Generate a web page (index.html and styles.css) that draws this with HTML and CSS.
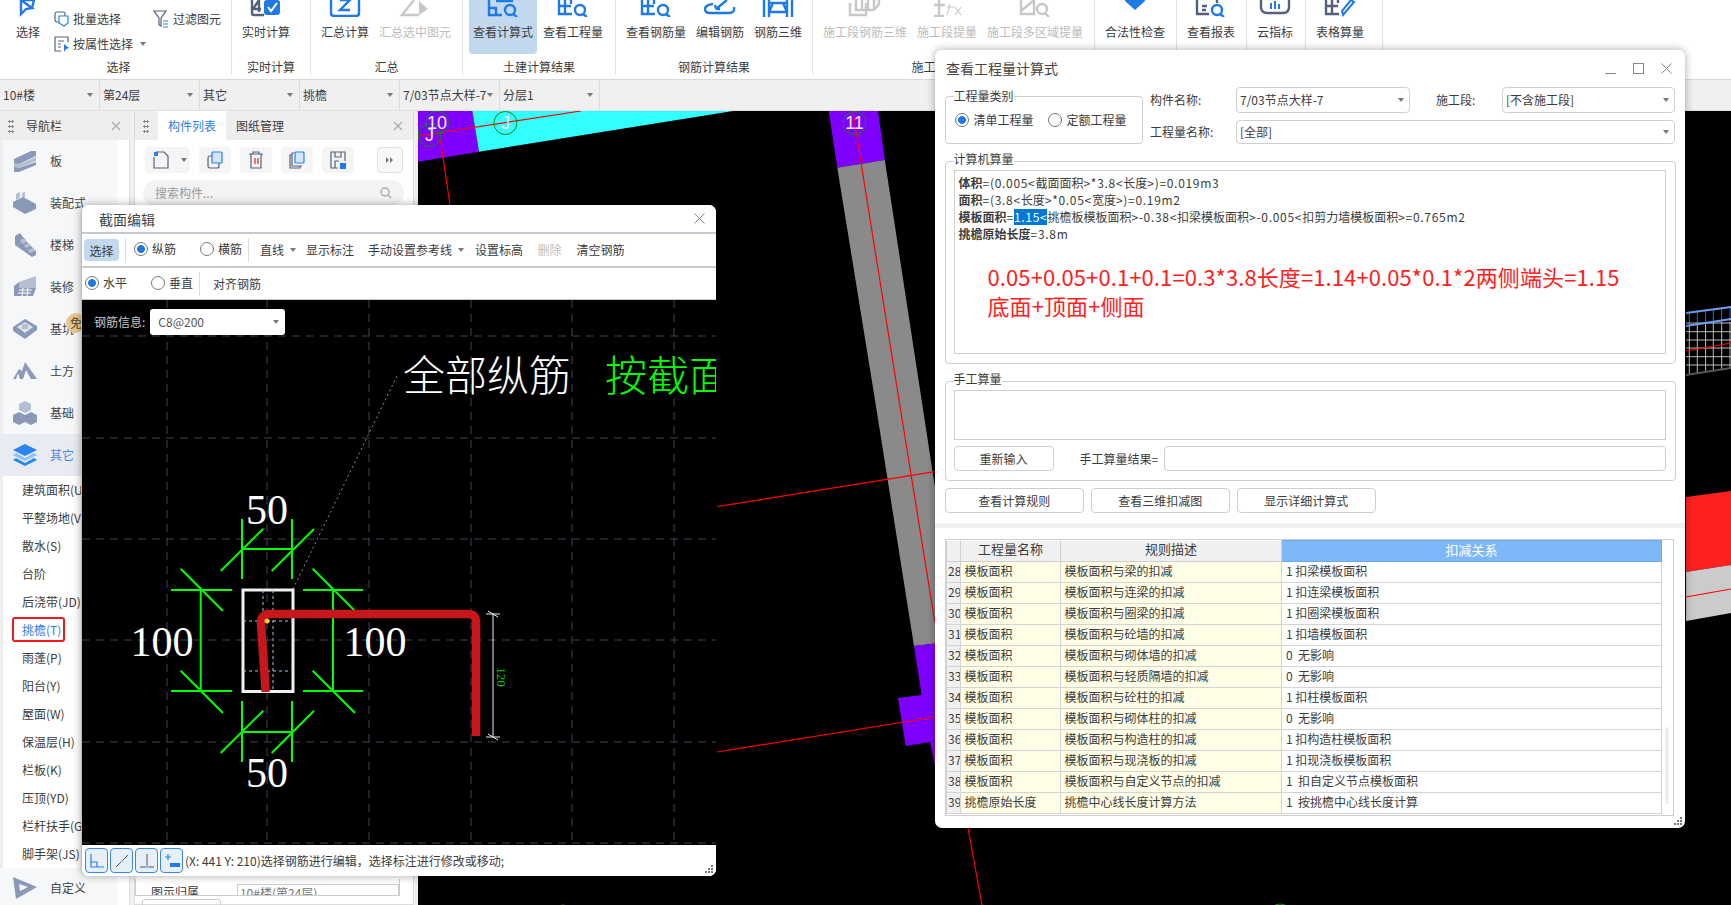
FILE: index.html
```html
<!DOCTYPE html>
<html lang="zh-CN">
<head>
<meta charset="utf-8">
<title>查看工程量计算式</title>
<link rel="stylesheet" href="styles.css">
</head>
<body>
<div class="app">
  <header class="ribbon">
    <div class="group g-select">
      <div class="tools">
        <div class="tool">
          <svg class="ti" width="24" height="17" viewBox="0 0 24 17"><path class="st" d="M5 0V14L10 9L16 8L5 0" /><path class="st" d="M5 0H18L16 8"/></svg>
          <span>选择</span>
        </div>
        <div class="small-grid">
          <div class="small"><svg width="16" height="16" viewBox="0 0 16 16"><rect class="sd" x="1" y="1" width="10" height="10" rx="2"/><path class="sb" d="M5 5H14V12L10 15L5 12Z"/></svg><span>批量选择</span></div>
          <div class="small filter"><svg width="16" height="18" viewBox="0 0 16 18"><path class="sd" d="M1 1H13L8 8V16L6 15V8Z"/><path class="sb" d="M10 11H15M10 14H15M10 17H15"/></svg><span>过滤图元</span></div>
          <div class="small"><svg width="16" height="16" viewBox="0 0 16 16"><path class="sd" d="M14 6V1H1V15H7M4 5H10M4 8H7M4 11H7"/><path class="bf" d="M10 8L15 12L12 13L10 16Z"/></svg><span>按属性选择</span><i class="caret small-caret"></i></div>
        </div>
      </div>
      <div class="glabel">选择</div>
    </div>
    <div class="group g-real">
      <div class="tools">
        <div class="tool">
          <svg class="ti" width="32" height="17" viewBox="0 0 32 17"><path class="sd2" d="M2 0V13Q2 15 4 15H14M9 0L3 9H11M9 0V12"/><rect class="bf" x="14" y="0" width="16" height="15" rx="3"/><path class="sw" d="M18 7L21 11L27 3"/></svg>
          <span>实时计算</span>
        </div>
      </div>
      <div class="glabel">实时计算</div>
    </div>
    <div class="group g-sum">
      <div class="tools">
        <div class="tool">
          <svg class="ti" width="32" height="17" viewBox="0 0 32 17"><path class="st" d="M2 0V13Q2 16 5 16H27Q30 16 30 13V0"/><path class="st" d="M11 0H21L11 10H21"/></svg>
          <span>汇总计算</span>
        </div>
        <div class="tool off">
          <svg class="ti" width="32" height="17" viewBox="0 0 32 17"><path class="sg" d="M15 0L3 15H20"/><path class="gf" d="M20 1L29 9L20 15Z"/></svg>
          <span>汇总选中图元</span>
        </div>
      </div>
      <div class="glabel">汇总</div>
    </div>
    <div class="group g-civil">
      <div class="tools">
        <div class="tool active">
          <svg class="ti" width="32" height="17" viewBox="0 0 32 17"><path class="st" d="M2 0V15H15M2 8H9V15M9 1H26"/><circle class="st" cx="23" cy="10" r="5"/><path class="st" d="M26 14L30 17"/></svg>
          <span>查看计算式</span>
        </div>
        <div class="tool">
          <svg class="ti" width="32" height="17" viewBox="0 0 32 17"><path class="st" d="M2 0V14H15M8 0V14M2 6H14M14 0V4"/><circle class="st" cx="23" cy="10" r="5"/><path class="st" d="M26 14L30 17"/></svg>
          <span>查看工程量</span>
        </div>
      </div>
      <div class="glabel">土建计算结果</div>
    </div>
    <div class="group g-rebar">
      <div class="tools">
        <div class="tool">
          <svg class="ti" width="32" height="17" viewBox="0 0 32 17"><path class="st" d="M2 0V14H15M8 0V14M2 6H14M14 0V4"/><circle class="st" cx="23" cy="10" r="5"/><path class="st" d="M26 14L30 17"/></svg>
          <span>查看钢筋量</span>
        </div>
        <div class="tool">
          <svg class="ti" width="32" height="17" viewBox="0 0 32 17"><path class="st" d="M9 4Q1 5 1 9Q1 13 6 13H25Q31 13 30 7"/><path class="st" d="M12 9L23 0M12 9L11 5M12 9L16 9"/></svg>
          <span>编辑钢筋</span>
        </div>
        <div class="tool">
          <svg class="ti" width="32" height="17" viewBox="0 0 32 17"><path class="st" d="M2 0V17M7 0V17M25 0V17M30 0V17M7 3H25M7 12H25M11 3L7 12M21 3L25 12"/></svg>
          <span>钢筋三维</span>
        </div>
      </div>
      <div class="glabel">钢筋计算结果</div>
    </div>
    <div class="group g-stage">
      <div class="tools">
        <div class="tool off">
          <svg class="ti" width="34" height="17" viewBox="0 0 34 17"><path class="sg" d="M2 3V15H18V3M8 0V10H26M14 0V10M20 0V10M26 0V10"/><path class="sg" d="M26 10L31 4V0"/></svg>
          <span>施工段钢筋三维</span>
        </div>
        <div class="tool off">
          <svg class="ti" width="32" height="17" viewBox="0 0 32 17"><path class="sg" d="M3 16H13M8 16V0M3 5H14"/><path class="sg thin" d="M19 4Q17 14 15 15M16 7H23M24 7L30 15M30 7L24 15"/></svg>
          <span>施工段提量</span>
        </div>
        <div class="tool off">
          <svg class="ti" width="32" height="17" viewBox="0 0 32 17"><path class="sg" d="M2 0V14H15V0M2 11L14 1"/><circle class="sg" cx="23" cy="9" r="5"/><path class="sg" d="M26 13L30 17"/></svg>
          <span>施工段多区域提量</span>
        </div>
      </div>
      <div class="glabel">施工段计算结果</div>
    </div>
    <div class="group g-check">
      <div class="tools"><div class="tool">
        <svg class="ti" width="24" height="17" viewBox="0 0 24 17"><path class="bf" d="M2 0H22V1L12 10L2 1Z"/></svg>
        <span>合法性检查</span>
      </div></div>
    </div>
    <div class="group g-report">
      <div class="tools"><div class="tool">
        <svg class="ti" width="32" height="17" viewBox="0 0 32 17"><path class="sd2" d="M2 0V14H14M7 6H12M7 10H11M22 0V3"/><circle class="st" cx="22" cy="10" r="5"/><path class="st" d="M25 14L29 17"/></svg>
        <span>查看报表</span>
      </div></div>
    </div>
    <div class="group g-cloud">
      <div class="tools"><div class="tool">
        <svg class="ti" width="32" height="17" viewBox="0 0 32 17"><path class="sd2" d="M2 0V7Q2 13 8 13H24Q30 13 30 7V0"/><path class="sb2" d="M12 3V9M16 1V9M20 4V9"/></svg>
        <span>云指标</span>
      </div></div>
    </div>
    <div class="group g-table">
      <div class="tools"><div class="tool">
        <svg class="ti" width="32" height="17" viewBox="0 0 32 17"><path class="sd2" d="M2 0V14H15M8 0V14M2 6H14M14 0V3"/><path class="sb2" d="M19 15L30 2L27 0L18 11Z"/></svg>
        <span>表格算量</span>
      </div></div>
    </div>
  </header>

  <nav class="bar">
    <div class="cell"><span>10#楼</span><i class="caret"></i></div>
    <div class="cell"><span>第24层</span><i class="caret"></i></div>
    <div class="cell"><span>其它</span><i class="caret"></i></div>
    <div class="cell"><span>挑檐</span><i class="caret"></i></div>
    <div class="cell"><span>7/03节点大样-7</span><i class="caret"></i></div>
    <div class="cell"><span>分层1</span><i class="caret"></i></div>
  </nav>

  <main class="work">
    <aside class="nav">
      <div class="panel-head nav-head">
        <i class="dots"></i><span class="nav-title">导航栏</span><svg class="x" width="10" height="10" viewBox="0 0 10 10"><path d="M1 1L9 9M9 1L1 9"/></svg>
      </div>
      <div class="nav-body">
        <div class="nav-item"><svg width="24" height="22" viewBox="0 0 24 22"><path class="n1" d="M1 9L18 1L23 1V6L6 14H1Z"/><path class="n2" d="M1 13L6 14L23 7V11L6 18H1Z"/><path class="n1" d="M1 17L6 18L23 12V15L6 22H1Z"/></svg><span>板</span></div>
        <div class="nav-item"><svg width="24" height="22" viewBox="0 0 24 22"><path class="n2" d="M3 2L7 0V6L3 8ZM9 1L12 0V5L9 6Z"/><path class="n1" d="M0 10L10 5L23 12V17L12 22L0 15Z"/></svg><span>装配式</span></div>
        <div class="nav-item"><svg width="24" height="24" viewBox="0 0 24 24"><path class="n1" d="M2 3L7 0L10 4L14 9L18 13L23 18V22L19 24L2 12Z"/><path class="n2" d="M7 7L12 5L14 9L9 11ZM11 12L16 10L18 13L13 15ZM15 17L20 15L22 18L17 20Z"/></svg><span>楼梯</span></div>
        <div class="nav-item"><svg width="24" height="22" viewBox="0 0 24 22"><path class="n2" d="M6 6L23 0V12L6 12Z"/><path class="n1" d="M1 10L6 6V12H23L20 20H1Z"/><path class="w" d="M6 14H19M5 17H18M10 12L9 20M15 12L14 20"/></svg><span>装修</span></div>
        <div class="nav-item"><svg width="24" height="20" viewBox="0 0 24 20"><path class="n1" d="M12 0L24 7V11L12 20L0 12V8Z"/><path class="n3" d="M12 3L20 8L12 14L4 8Z"/><path class="n2" d="M9 5H15V10H9Z"/></svg><span>基坑</span></div>
        <div class="nav-item"><svg width="24" height="18" viewBox="0 0 24 18"><path class="n1" d="M0 17L6 7L9 9L12 0L24 17H18L13 8L10 17H7L5 11L3 17Z"/></svg><span>土方</span></div>
        <div class="nav-item"><svg width="24" height="24" viewBox="0 0 24 24"><path class="n2" d="M12 0L18 3V9L12 12L6 9V3Z"/><path class="n1" d="M6 11L12 14V21L6 24L0 21V14Z"/><path class="n1" d="M18 11L24 14V21L18 24L12 21V14Z"/></svg><span>基础</span></div>
        <div class="nav-item active"><svg width="24" height="22" viewBox="0 0 24 22"><path class="b1" d="M12 0L24 6L12 12L0 6Z"/><path class="b2" d="M3 9L12 14L21 9L24 11L12 17L0 11Z"/><path class="b1" d="M3 14L12 19L21 14L24 16L12 22L0 16Z"/></svg><span>其它</span></div>
        <ul class="sub">
          <li>建筑面积(U)</li>
          <li>平整场地(V)</li>
          <li>散水(S)</li>
          <li>台阶</li>
          <li>后浇带(JD)</li>
          <li class="picked"><span>挑檐(T)</span></li>
          <li>雨蓬(P)</li>
          <li>阳台(Y)</li>
          <li>屋面(W)</li>
          <li>保温层(H)</li>
          <li>栏板(K)</li>
          <li>压顶(YD)</li>
          <li>栏杆扶手(G)</li>
          <li>脚手架(JS)</li>
        </ul>
        <div class="nav-item custom"><svg width="24" height="22" viewBox="0 0 24 22"><path class="n1" d="M0 0L24 10L3 22ZM6 7L7 14L15 10Z"/></svg><span>自定义</span></div>
      </div>
      <span class="free">免</span>
    </aside>

    <section class="comp">
      <div class="panel-head">
        <i class="dots"></i>
        <span class="tab on">构件列表</span>
        <span class="tab">图纸管理</span>
        <svg class="x comp-x" width="10" height="10" viewBox="0 0 10 10"><path d="M1 1L9 9M9 1L1 9"/></svg>
      </div>
      <div class="comp-body">
        <div class="comp-tools">
          <div class="ibtn new"><svg width="16" height="18" viewBox="0 0 16 18"><path class="sd1" d="M3 1H11L15 5V17H1V6"/><path class="chk" d="M1 1H5V5H1Z"/></svg><i class="caret"></i></div>
          <div class="ibtn"><svg width="16" height="18" viewBox="0 0 16 18"><rect class="sd1" x="1" y="5" width="11" height="12" rx="2"/><rect class="blue-box" x="5" y="1" width="10" height="11" rx="1"/></svg></div>
          <div class="ibtn"><svg width="16" height="18" viewBox="0 0 16 18"><path class="sd1" d="M1 3H15M5 3V1H11V3M3 3V17H13V3"/><path class="red" d="M7 7V13M10 7V13"/></svg></div>
          <div class="ibtn"><svg width="16" height="18" viewBox="0 0 16 18"><path class="sd1" d="M3 4H1V17H11V15M5 2H3V15H13"/><rect class="blue-box" x="6" y="1" width="9" height="11" rx="1"/></svg></div>
          <div class="ibtn"><svg width="16" height="18" viewBox="0 0 16 18"><path class="sd1" d="M8 17H1V1H15V10M5 1V6H11V1M5 17V10H9"/><rect class="bf" x="10" y="12" width="6" height="6"/></svg></div>
          <div class="ibtn more"><svg width="8" height="8" viewBox="0 0 8 8"><path class="gd" d="M0 1L3 4L0 7ZM4 1L7 4L4 7Z"/></svg></div>
        </div>
        <div class="search"><span>搜索构件...</span><svg width="12" height="12" viewBox="0 0 12 12"><circle class="sm" cx="5" cy="5" r="4"/><path class="sm" d="M8 8L11 11"/></svg></div>
        <div class="comp-rest"></div>
        <div class="prop"><span class="prop-k">图示归属</span><span class="prop-v">10#楼(第24层)</span></div>
        <div class="comp-btn">截面编辑</div>
      </div>
    </section>

    <div class="cad">
      <svg width="1313" height="794" viewBox="418 111 1313 794">
        <polygon class="purple" points="418,111 472.3,111 479,151.7 418,161.7"/>
        <polygon class="cyan" points="472.3,111 733,111 479,151.7"/>
        <polygon class="purple" points="828.7,111 878,111 884.8,160 837.3,167.7"/>
        <polygon class="gray" points="837.3,167.7 884.8,160 940,520 940,643 914,646 875,400"/>
        <polygon class="purple" points="914,646 940,643 940,790 930,742 905.7,746 898,698 921.7,695"/>
        <line class="rl" x1="418" y1="136" x2="581" y2="111"/>
        <line class="rl" x1="440" y1="137" x2="450" y2="205"/>
        <polyline class="rl" points="852.8,111 867,200 899,400 935,623"/>
        <line class="rl" x1="717" y1="506.7" x2="935" y2="471.7"/>
        <line class="rl" x1="717" y1="752" x2="935" y2="717"/>
        <line class="rl" x1="968" y1="828" x2="982" y2="905"/>
        <circle class="gc" cx="437" cy="122.7" r="11.5"/>
        <circle class="gc" cx="429.6" cy="135" r="11.5"/>
        <circle class="gc" cx="505.4" cy="123" r="11.5"/>
        <circle class="gc" cx="854.5" cy="123" r="11.5"/>
        <circle class="gc" cx="563" cy="917" r="12"/>
        <circle class="gc" cx="1280" cy="916" r="12"/>
        <text class="ct" x="437" y="129">10</text>
        <text class="ct" x="429.6" y="141">J</text>
        <text class="ct" x="505.4" y="129">J</text>
        <text class="ct" x="854.5" y="129">11</text>
        <path class="mesh" d="M1689.3 322V374M1697.3 322V373M1705.6 322V372M1713.3 322V371M1721.7 322V370M1730 322V369M1686 323H1731M1686 331.7H1731M1686 340H1731M1686 348H1731M1686 356.7H1731M1686 365H1731"/>
        <path class="mesh-b" d="M1689.3 313V326M1697.3 312V325M1705.6 311V324M1713.3 310V323M1721.7 309V322M1730 308V321"/>
        <path class="mesh-bt" d="M1686 313L1731 307M1686 326L1731 319"/>
        <path class="mesh-e" d="M1686 375L1731 368"/>
        <line class="rl" x1="1686" y1="351" x2="1731" y2="343"/>
        <polygon class="band-r" points="1686,497 1731,491 1731,565 1686,572"/>
        <polygon class="band-g" points="1686,572 1731,565 1731,613 1686,621"/>
        <line class="rl" x1="1686" y1="597" x2="1731" y2="589"/>
      </svg>
    </div>
  </main>

  <section class="dlg section-dlg">
    <div class="title-bar"><h2>截面编辑</h2><svg class="wclose" width="11" height="11" viewBox="0 0 11 11"><path d="M.5.5L10.5 10.5M10.5.5L.5 10.5"/></svg></div>
    <div class="tb tb1">
      <span class="tb-sel">选择</span>
      <i class="vdiv d1"></i>
      <label class="rad r1"><i class="radio on"></i>纵筋</label>
      <label class="rad r2"><i class="radio"></i>横筋</label>
      <i class="vdiv d2"></i>
      <span class="tb-combo">直线<i class="caret"></i></span>
      <span class="tb-t t1">显示标注</span>
      <span class="tb-t t2">手动设置参考线</span><i class="caret t2c"></i>
      <span class="tb-t t3">设置标高</span>
      <span class="tb-t t4 dim">删除</span>
      <span class="tb-t t5">清空钢筋</span>
    </div>
    <div class="tb tb2">
      <label class="rad r3"><i class="radio on"></i>水平</label>
      <label class="rad r4"><i class="radio"></i>垂直</label>
      <i class="vdiv d3"></i>
      <span class="tb-t t6">对齐钢筋</span>
    </div>
    <div class="sec-canvas">
      <svg width="634" height="545" viewBox="82 300 634 545">
        <path class="grid" d="M167 300V845M267 300V845M369 300V845M471 300V845M572 300V845M674 300V845M82 336H716M82 438H716M82 539H716M82 640H716M82 742H716M82 843H716"/>
        <path class="lead" d="M293 589L397 376"/>
        <text class="big-cjk wt" x="403" y="391">全部纵筋</text>
        <text class="big-cjk gn" x="605" y="391">按截面</text>
        <rect class="sect" x="243" y="590" width="50" height="101.5"/>
        <path class="inner" d="M263 590V692M273 590V692M243 621H293M243 671H293"/>
        <path class="dim-g" d="M242 519V579M292 519V579M242 549H292M220.7 571L263.3 528.7M271.7 571L314 529"/>
        <path class="dim-g" d="M242 701V762M292 701V762M242 732H292M220.7 753L263.3 710.7M271.7 753L314 710.7"/>
        <path class="dim-g" d="M171 590H232M171 691H232M200.7 590V691M180.7 568.7L223 611M180.7 670.7L223 713"/>
        <path class="dim-g" d="M303 590H363M303 691H363M333 590V691M312.7 568.7L355 611M312.7 670.7L355 713"/>
        <path class="bar-r" d="M265.7 692L261 623Q261 614 270 614H468Q476 614 476 622V736"/>
        <circle class="dot" cx="267" cy="621" r="2.5"/>
        <path class="dim-w" d="M493 614V737M488 611L498 617M488 734L498 740M486 614H500M486 737H500"/>
        <text class="d-num" x="267" y="524">50</text>
        <text class="d-num" x="267" y="787">50</text>
        <text class="d-num" x="162" y="656">100</text>
        <text class="d-num" x="375" y="656">100</text>
        <text class="d-small" transform="translate(497 677) rotate(90)">120</text>
      </svg>
      <div class="rebar-info">
        <span>钢筋信息:</span>
        <div class="rebar-sel">C8@200<i class="caret"></i></div>
      </div>
    </div>
    <div class="status">
      <span class="sbtn"><svg width="18" height="18" viewBox="0 0 18 18"><path class="si" d="M3 2V15H16M3 10H9V15"/></svg></span>
      <span class="sbtn"><svg width="18" height="18" viewBox="0 0 18 18"><path class="si-d" d="M3 15L15 3"/><circle class="sp" cx="9" cy="9" r="1.5"/></svg></span>
      <span class="sbtn"><svg width="18" height="18" viewBox="0 0 18 18"><path class="si-d" d="M9 2V15M2 15H16"/><circle class="sp" cx="9" cy="15" r="1.5"/></svg></span>
      <span class="sbtn"><svg width="18" height="18" viewBox="0 0 18 18"><path class="si" d="M5 2V8M2 5H8"/><rect class="bf" x="7" y="11" width="10" height="4"/></svg></span>
      <span class="status-t">(X: 441 Y: 210)选择钢筋进行编辑，选择标注进行修改或移动;</span>
    </div>
    <svg class="grip" width="9" height="9" viewBox="0 0 9 9"><path d="M6 0H8V2H6ZM3 3H5V5H3ZM6 3H8V5H6ZM0 6H2V8H0ZM3 6H5V8H3ZM6 6H8V8H6Z"/></svg>
  </section>

  <section class="dlg calc-dlg">
    <div class="title-bar calc-title">
      <h2>查看工程量计算式</h2>
      <div class="wbtns">
        <svg width="11" height="11" viewBox="0 0 11 11"><path d="M0 10.5H11"/></svg>
        <svg width="11" height="11" viewBox="0 0 11 11"><rect x=".5" y=".5" width="10" height="10"/></svg>
        <svg width="11" height="11" viewBox="0 0 11 11"><path d="M.5.5L10.5 10.5M10.5.5L.5 10.5"/></svg>
      </div>
    </div>
    <div class="calc-top">
      <div class="head-row">
        <div class="gbox type-box">
          <span class="legend">工程量类别</span>
          <label class="rad r5"><i class="radio on"></i>清单工程量</label>
          <label class="rad r6"><i class="radio"></i>定额工程量</label>
        </div>
        <div class="fields">
          <span class="f-l">构件名称:</span>
          <div class="combo">7/03节点大样-7<i class="caret"></i></div>
          <span class="f-l2">施工段:</span>
          <div class="combo">[不含施工段]<i class="caret"></i></div>
          <span class="f-l">工程量名称:</span>
          <div class="combo wide">[全部]<i class="caret"></i></div>
        </div>
      </div>
      <div class="gbox auto-box">
        <span class="legend high">计算机算量</span>
        <div class="formula">
          <p><b>体积</b><span class="as">=(0.005&lt;</span>截面面积<span class="as">&gt;*3.8&lt;</span>长度<span class="as">&gt;)=0.019m3</span></p>
          <p><b>面积</b><span class="as">=(3.8&lt;</span>长度<span class="as">&gt;*0.05&lt;</span>宽度<span class="as">&gt;)=0.19m2</span></p>
          <p><b>模板面积</b><span class="as">=</span><mark class="as">1.15&lt;</mark>挑檐板模板面积<span class="as">&gt;-0.38&lt;</span>扣梁模板面积<span class="as">&gt;-0.005&lt;</span>扣剪力墙模板面积<span class="as">&gt;=0.765m2</span></p>
          <p><b>挑檐原始长度</b><span class="as">=3.8m</span></p>
          <div class="note">
            <p>0.05+0.05+0.1+0.1=0.3*3.8长度=1.14+0.05*0.1*2两侧端头=1.15</p>
            <p>底面+顶面+侧面</p>
          </div>
        </div>
      </div>
      <div class="gbox manual-box">
        <span class="legend high">手工算量</span>
        <div class="manual-area"></div>
        <div class="manual-row">
          <span class="btn redo">重新输入</span>
          <span class="result-l">手工算量结果=</span>
          <div class="result-in"></div>
        </div>
      </div>
      <div class="btn-row">
        <span class="btn">查看计算规则</span>
        <span class="btn">查看三维扣减图</span>
        <span class="btn">显示详细计算式</span>
      </div>
    </div>
    <div class="splitter"></div>
    <div class="table-wrap">
      <table>
        <colgroup><col class="c0"><col class="c1"><col class="c2"><col class="c3"></colgroup>
        <thead><tr><th></th><th>工程量名称</th><th>规则描述</th><th class="sel">扣减关系</th></tr></thead>
        <tbody>
          <tr><td>28</td><td>模板面积</td><td>模板面积与梁的扣减</td><td>1 扣梁模板面积</td></tr>
          <tr><td>29</td><td>模板面积</td><td>模板面积与连梁的扣减</td><td>1 扣连梁模板面积</td></tr>
          <tr><td>30</td><td>模板面积</td><td>模板面积与圈梁的扣减</td><td>1 扣圈梁模板面积</td></tr>
          <tr><td>31</td><td>模板面积</td><td>模板面积与砼墙的扣减</td><td>1 扣墙模板面积</td></tr>
          <tr><td>32</td><td>模板面积</td><td>模板面积与砌体墙的扣减</td><td>0&nbsp; 无影响</td></tr>
          <tr><td>33</td><td>模板面积</td><td>模板面积与轻质隔墙的扣减</td><td>0&nbsp; 无影响</td></tr>
          <tr><td>34</td><td>模板面积</td><td>模板面积与砼柱的扣减</td><td>1 扣柱模板面积</td></tr>
          <tr><td>35</td><td>模板面积</td><td>模板面积与砌体柱的扣减</td><td>0&nbsp; 无影响</td></tr>
          <tr><td>36</td><td>模板面积</td><td>模板面积与构造柱的扣减</td><td>1 扣构造柱模板面积</td></tr>
          <tr><td>37</td><td>模板面积</td><td>模板面积与现浇板的扣减</td><td>1 扣现浇板模板面积</td></tr>
          <tr><td>38</td><td>模板面积</td><td>模板面积与自定义节点的扣减</td><td>1&nbsp; 扣自定义节点模板面积</td></tr>
          <tr><td>39</td><td>挑檐原始长度</td><td>挑檐中心线长度计算方法</td><td>1&nbsp; 按挑檐中心线长度计算</td></tr>
        </tbody>
      </table>
      <i class="scroll"></i>
    </div>
    <svg class="grip" width="9" height="9" viewBox="0 0 9 9"><path d="M6 0H8V2H6ZM3 3H5V5H3ZM6 3H8V5H6ZM0 6H2V8H0ZM3 6H5V8H3ZM6 6H8V8H6Z"/></svg>
  </section>
</div>
</body>
</html>
```

FILE: styles.css
```css
*, *::before, *::after { box-sizing: border-box; }
html, body { margin: 0; padding: 0; height: 100%; overflow: hidden; }
body { font: 12px/16px "Noto Sans CJK SC", "Liberation Sans", sans-serif; color: #3c3c3c; background: #f0f0f0; }
p, h2, ul { margin: 0; padding: 0; }
i { display: block; font-style: normal; }
svg { display: block; flex: none; }
.app { position: relative; width: 1731px; height: 905px; overflow: hidden; display: flex; flex-direction: column; }

.ribbon { height: 80px; flex: none; display: flex; background: #fff; border-bottom: 1px solid #d8d8d8; }
.group { height: 75px; padding-left: 6px; border-right: 1px solid #e2e2e2; display: flex; flex-direction: column; flex: none; }
.tools { height: 58px; display: flex; gap: 2px; align-items: flex-start; }
.glabel { height: 17px; line-height: 18px; text-align: center; margin-left: -6px; }
.tool { height: 54px; padding: 0 4px; display: flex; flex-direction: column; align-items: center; white-space: nowrap; border-radius: 0 0 4px 4px; }
.tool .ti { height: 17px; margin-bottom: 7px; }
.tool.active { background: #c1d8ef; }
.tool.off { color: #bcbcbc; }
.g-select { width: 232px; }
.g-select .tools { gap: 0; }
.g-select .tool { margin-left: 6px; }
.g-select .glabel { margin-left: 0; }
.g-real { width: 79px; }
.g-sum { width: 152px; }
.g-civil { width: 153px; }
.g-rebar { width: 197px; }
.g-stage { width: 282px; }
.g-check { width: 82px; }
.g-report { width: 70px; }
.g-cloud { width: 59px; }
.g-table { width: 77px; }
.small-grid { display: grid; grid-template-columns: 99px auto; grid-auto-rows: 25px; padding-top: 6px; margin-left: 10px; }
.small { display: flex; align-items: center; gap: 3px; white-space: nowrap; }
.small.filter { gap: 4px; }
.small-caret { margin-left: 4px; }

.st { fill: none; stroke: #1f7ae6; stroke-width: 2.4; }
.sd2 { fill: none; stroke: #55617a; stroke-width: 2.4; }
.sb2 { fill: none; stroke: #1f7ae6; stroke-width: 2; }
.sg { fill: none; stroke: #c8c8c8; stroke-width: 2.4; }
.sg.thin { stroke-width: 1.2; }
.gf { fill: #c8c8c8; }
.bf { fill: #1f7ae6; }
.sw { fill: none; stroke: #fff; stroke-width: 2; }
.sd { fill: none; stroke: #55617a; stroke-width: 1.2; }
.sb { fill: #fff; stroke: #2a80e8; stroke-width: 1.2; }

.caret { display: inline-block; width: 0; height: 0; border: 3px solid transparent; border-top: 4px solid #777; border-bottom: 0; vertical-align: middle; flex: none; box-sizing: content-box; }

.bar { height: 31px; flex: none; display: flex; background: #f0f0f0; border-bottom: 1px solid #e0e0e0; }
.cell { width: 100px; height: 30px; padding: 0 6px 0 3px; display: flex; align-items: center; justify-content: space-between; border-right: 1px solid #dcdcdc; white-space: nowrap; overflow: hidden; }

.work { flex: 1; display: flex; gap: 4px; min-height: 0; background: #f0f0f0; }

.panel-head { height: 29px; flex: none; display: flex; align-items: center; background: #eeeeef; position: relative; }
.dots { width: 6px; height: 14px; margin-left: 8px; background: radial-gradient(circle, #888 1.1px, transparent 1.3px) 0 0 / 3px 5px; }
.x { fill: none; stroke: #aaa; stroke-width: 1.2; }
.x path { stroke: #aaa; }

.nav { width: 130px; flex: none; display: flex; flex-direction: column; position: relative; }
.nav-head .x { margin-left: 49px; }
.nav-title { margin-left: 3px; }
.nav-body { flex: 1; background: linear-gradient(90deg, #eee 0, #eee 3px, #f6f7f9 3px, #f6f7f9 117px, #fff 117px); display: flex; flex-direction: column; min-height: 0; border-right: 1px solid #e0e0e0; }
.nav-item { height: 42px; flex: none; padding-left: 13px; display: flex; align-items: center; gap: 13px; width: 117px; margin-left: 0; color: #444; }
.nav-item.active { background: #e8ebf1; color: #4a86e8; }
.nav-item.custom { height: 40px; background: #f6f7f9; }
.n1 { fill: #8a99b7; }
.n2 { fill: #b4bfd3; }
.n3 { fill: #dfe3ec; }
.w { fill: none; stroke: #fff; stroke-width: 1; }
.b1 { fill: #2a86ee; }
.b2 { fill: #8cc0f8; }
.sub { list-style: none; background: #fff; width: 120px; margin-left: 3px; }
.sub li { height: 28px; line-height: 28px; padding-left: 19px; white-space: nowrap; overflow: hidden; }
.sub .picked { position: relative; color: #2a7fe8; }
.sub .picked::after { content: ""; position: absolute; left: 9px; top: 1px; width: 53px; height: 25px; border: 2px solid #f01a1a; border-radius: 3px; }
.free { position: absolute; left: 66px; top: 202px; width: 20px; height: 20px; border-radius: 50%; background: #e8c78e; color: #5a4a30; text-align: center; line-height: 20px; }

.comp { width: 280px; flex: none; display: flex; flex-direction: column; border: 1px solid #dcdcdc; border-top: 0; background: #fff; }
.tab { height: 29px; line-height: 29px; padding: 0 10px; }
.panel-head .dots { margin-right: 9px; }
.tab.on { background: #fff; color: #2a7fe8; }
.comp-x { position: absolute; right: 10px; top: 10px; }
.comp-body { flex: 1; display: flex; flex-direction: column; padding: 7px 0 0 8px; min-height: 0; }
.comp-tools { display: flex; gap: 9px; height: 26px; margin-left: 2px; }
.ibtn { width: 32px; height: 26px; background: #f5f5f5; border-radius: 4px; display: flex; align-items: center; justify-content: center; gap: 6px; }
.ibtn.new { width: 45px; justify-content: flex-start; padding-left: 8px; }
.ibtn.new .caret { margin-left: 6px; }
.ibtn.more { margin-left: 14px; width: 26px; background: #f8f8f8; border: 1px solid #e2e2e2; }
.gd { fill: #777; }
.sd1 { fill: none; stroke: #55617a; stroke-width: 1.2; }
.chk { fill: #2a80e8; }
.blue-box { fill: #d5e6fa; stroke: #2a80e8; stroke-width: 1.2; }
.red { fill: none; stroke: #e02020; stroke-width: 1.2; }
.search { width: 261px; height: 26px; margin-top: 7px; border-radius: 13px; background: #f3f3f3; display: flex; align-items: center; justify-content: space-between; padding: 0 12px; color: #9a9a9a; }
.sm { fill: none; stroke: #aaa; stroke-width: 1.4; }
.comp-rest { flex: 1; }
.prop { width: 265px; height: 17px; overflow: hidden; border-bottom: 1px solid #ccc; border-left: 1px solid #ccc; border-right: 1px solid #ccc; display: flex; align-items: flex-start; padding-top: 5px; margin-left: -8px; position: relative; }
.prop-k { margin-left: 15px; width: 87px; }
.prop-v { border: 1px solid #ccc; width: 164px; height: 20px; padding-left: 2px; color: #777; }
.comp-btn { width: 79px; height: 26px; margin: 3px 0 -21px -1px; border: 1px solid #ccc; border-radius: 3px; text-align: center; line-height: 24px; flex: none; }

.cad { flex: 1; background: #000; overflow: hidden; }
.purple { fill: #8000ff; }
.cyan { fill: #33ffff; }
.gray { fill: #8a8a8a; }
.rl { fill: none; stroke: #f00; stroke-width: 1.2; }
.gc { fill: none; stroke: #0a8a0a; stroke-width: 1; }
.ct { fill: #f4e8ff; font: 18px "Liberation Sans", sans-serif; text-anchor: middle; }
.mesh { fill: none; stroke: #bdbdbd; stroke-width: 1; }
.mesh-b { fill: none; stroke: #1f6ff0; stroke-width: 1; }
.mesh-bt { fill: none; stroke: #6f9ff0; stroke-width: 2; }
.mesh-e { fill: none; stroke: #555; stroke-width: 2; }
.band-r { fill: #ff2020; }
.band-g { fill: #cbcbcb; }

.dlg { position: absolute; background: #fff; border-radius: 7px; box-shadow: 0 0 8px rgba(0, 0, 0, .35); display: flex; flex-direction: column; overflow: hidden; }
.section-dlg { left: 81px; top: 205px; width: 635px; height: 671px; border-left: 1px solid #b8bcc4; }
.title-bar { flex: none; display: flex; align-items: center; justify-content: space-between; background: #fff; }
.title-bar h2 { font-size: 14px; font-weight: 400; color: #444; }
.section-dlg .title-bar { height: 27px; padding: 0 11px 0 17px; }
.wclose path, .wbtns path, .wbtns rect { fill: none; stroke: #888; stroke-width: 1; }

.tb { flex: none; display: flex; align-items: center; border-top: 2px solid #c6cad0; background: #fff; }
.tb1 { height: 34px; }
.tb2 { height: 34px; border-bottom: 1px solid #c6cad0; }
.tb-sel { width: 35px; height: 22px; margin-left: 2px; line-height: 24px; text-align: center; background: #c1d8ef; border-radius: 4px; }
.vdiv { width: 1px; height: 24px; background: #dcdcdc; flex: none; }
.d1 { margin-left: 6px; }
.rad { display: flex; align-items: center; gap: 4px; white-space: nowrap; flex: none; }
.radio { width: 14px; height: 14px; border: 1px solid #777; border-radius: 50%; flex: none; background: #fff; }
.radio.on { background: radial-gradient(circle, #1e78e6 0, #1e78e6 3.6px, #fff 4.2px); }
.r1 { margin: -3px 0 0 8px; }
.r2 { margin: -3px 0 0 24px; }
.d2 { margin-left: 6px; }
.tb-combo { width: 39px; margin-left: 8px; padding-left: 3px; display: flex; align-items: center; gap: 6px; }
.tb-t { flex: none; white-space: nowrap; }
.t1 { margin-left: 10px; }
.t2 { margin-left: 14px; }
.t2c { margin-left: 6px; }
.t3 { margin-left: 11px; }
.t4 { margin-left: 14.5px; }
.dim { color: #bdbdbd; }
.t5 { margin-left: 15px; }
.r3 { margin: -2px 0 0 3px; }
.r4 { margin: -2px 0 0 24px; }
.d3 { margin-left: 6px; }
.t6 { margin-left: 13px; }

.sec-canvas { flex: 1; background: #000; position: relative; min-height: 0; }
.grid { fill: none; stroke: #3c4454; stroke-width: 1; stroke-dasharray: 8 6; }
.lead { fill: none; stroke: #8a8a8a; stroke-width: 1; stroke-dasharray: 2 3; }
.big-cjk { font: 300 42px "Noto Sans CJK SC", sans-serif; }
.wt { fill: #fff; }
.gn { fill: #00ff00; }
.sect { fill: none; stroke: #f0f0f0; stroke-width: 3; }
.inner { fill: none; stroke: #a8c8e8; stroke-width: 1; stroke-dasharray: 3 3; }
.dim-g { fill: none; stroke: #00ff00; stroke-width: 2; }
.bar-r { fill: none; stroke: #c8161d; stroke-width: 8.5; }
.dot { fill: #ffcc22; }
.dim-w { fill: none; stroke: #eee; stroke-width: 1; }
.d-num { fill: #fff; font: 42px "Liberation Serif", serif; text-anchor: middle; }
.d-small { fill: #00d000; font: 13px "Liberation Serif", serif; text-anchor: middle; }
.rebar-info { position: absolute; left: 12px; top: 9px; display: flex; align-items: center; gap: 5px; color: #c8c8c8; }
.rebar-sel { width: 135px; height: 26px; background: #fff; border-radius: 3px; color: #555; padding: 0 6px 0 8px; display: flex; align-items: center; justify-content: space-between; }

.status { height: 31px; flex: none; background: #fff; display: flex; align-items: center; gap: 2px; padding-left: 3px; }
.sbtn { width: 23px; height: 25px; flex: none; background: #e6f0fb; border: 1px solid #3a86e8; border-radius: 4px; display: flex; align-items: center; justify-content: center; }
.si { fill: none; stroke: #2a80e8; stroke-width: 1.2; }
.si-d { fill: none; stroke: #555; stroke-width: 1; }
.sp { fill: #a8c8f0; }
.status-t { margin-left: 0; white-space: nowrap; }
.grip { position: absolute; right: 2px; bottom: 2px; fill: #777; }

.calc-dlg { left: 935px; top: 50px; width: 750px; height: 778px; }
.calc-title { height: 37px; padding: 0 13px 0 11px; }
.calc-title h2 { padding-bottom: 2px; }
.wbtns { display: flex; gap: 17px; padding-bottom: 1px; }
.calc-top { flex: none; padding: 0 9.5px 0 9.5px; }
.head-row { height: 57px; display: flex; }
.gbox { position: relative; border: 1px solid #cfcfcf; border-radius: 4px; }
.legend { position: absolute; left: 8px; top: -9px; background: #fff; line-height: 16px; white-space: nowrap; }
.legend.high { top: -11px; }
.type-box { width: 198px; height: 48px; margin-top: 9px; flex: none; display: flex; align-items: center; padding-left: 9px; padding-bottom: 0; }
.r5 { gap: 5px; }
.r6 { gap: 5px; margin-left: 14px; }
.fields { flex: 1; display: grid; grid-template-columns: 86px 174px 92px 173px; grid-template-rows: 26px 24px; row-gap: 7px; margin-left: 7.5px; align-items: center; }
.f-l2 { padding-left: 26px; }
.combo { height: 100%; border: 1px solid #cfcfcf; border-radius: 4px; padding: 0 5px 0 3px; display: flex; align-items: center; justify-content: space-between; white-space: nowrap; }
.combo.wide { grid-column: 2 / 5; }
.auto-box { height: 203px; margin-top: 17px; padding: 8px 9px 9px 8px; }
.formula { height: 184px; border: 1px solid #cfcfcf; padding: 3px 4px; line-height: 17px; white-space: nowrap; }
.formula b { font-weight: 700; }
.as { letter-spacing: .7px; }
.formula mark { background: #0078d7; color: #fff; display: inline-block; height: 16px; line-height: 16px; }
.note { margin-top: 20px; padding-left: 29px; color: #ff2020; font-size: 22px; line-height: 29px; letter-spacing: .1px; }
.manual-box { height: 100px; margin-top: 17px; padding: 8px 9px 0 8px; }
.manual-area { height: 50px; border: 1px solid #cfcfcf; }
.manual-row { display: flex; align-items: center; height: 25px; margin-top: 6px; }
.btn { height: 25px; line-height: 24px; text-align: center; border: 1px solid #cfcfcf; border-radius: 4px; background: #fff; flex: none; white-space: nowrap; }
.redo { width: 100px; }
.result-l { margin-left: 26px; white-space: nowrap; flex: none; }
.result-in { flex: 1; height: 25px; margin-left: 6px; border: 1px solid #cfcfcf; border-radius: 4px; }
.btn-row { display: flex; gap: 6.5px; margin-top: 7px; }
.btn-row .btn { width: 139.5px; }
.splitter { height: 5px; margin-top: 10px; background: #f0f0f0; flex: none; }
.table-wrap { position: relative; width: 729px; height: 277px; margin: 11px 0 0 10px; border: 1px solid #cfcfcf; }
table { border-collapse: collapse; table-layout: fixed; width: 715px; }
.c0 { width: 14px; }
.c1 { width: 100px; }
.c2 { width: 221px; }
.c3 { width: 380px; }
tr { height: 21px; }
th { height: 21px; padding: 0 0 3px; font-weight: 400; font-size: 13px; line-height: 16px; background: #f0f0f0; border: 1px solid #cfcfcf; border-top: 0; color: #3c3c3c; }
th.sel { background: #7fb8f8; color: #fff; border: 1px solid #6fa8ea; }
td { height: 21px; padding: 0 0 2px 3.5px; background: #fefde6; border: 1px solid #d4d4d4; white-space: nowrap; overflow: hidden; }
td:first-child { background: #f0f0f0; padding: 0 0 2px 1px; }
td:last-child { background: #fff; padding-left: 4px; }
.scroll { position: absolute; left: 719px; top: 187px; width: 4px; height: 77px; background: #eeeeee; border-radius: 2px; }
```
